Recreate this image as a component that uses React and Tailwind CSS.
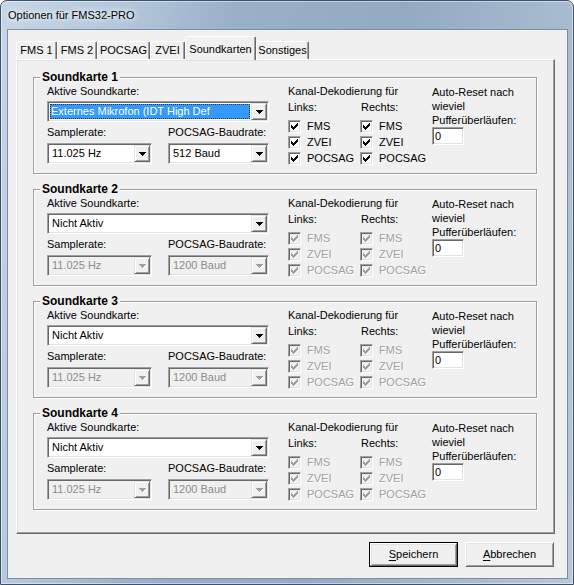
import React from "react";

// classic 3D edges
const SUNKEN =
  "border border-t-[#a0a0a0] border-l-[#a0a0a0] border-r-white border-b-white shadow-[inset_1px_1px_0_#696969,inset_-1px_-1px_0_#e3e3e3]";
const RAISED =
  "border border-t-[#e3e3e3] border-l-[#e3e3e3] border-r-[#696969] border-b-[#696969] shadow-[inset_1px_1px_0_#fff,inset_-1px_-1px_0_#a0a0a0]";
const BUTTON =
  "border border-t-white border-l-white border-r-[#696969] border-b-[#696969] shadow-[inset_1px_1px_0_#e3e3e3,inset_-1px_-1px_0_#a0a0a0]";
const GRAYTEXT = "text-[#a0a0a0] [text-shadow:1px_1px_0_#fff]";

const tabs = [
  { label: "FMS 1", w: "w-[41px]" },
  { label: "FMS 2", w: "w-[40px]" },
  { label: "POCSAG", w: "w-[53px]" },
  { label: "ZVEI", w: "w-[35px]" },
  { label: "Soundkarten", w: "w-[71px]", active: true },
  { label: "Sonstiges", w: "w-[53px]" },
];

const cards = [
  { n: 1, device: "Externes Mikrofon (IDT High Def", rate: "11.025 Hz", baud: "512 Baud", on: true },
  { n: 2, device: "Nicht Aktiv", rate: "11.025 Hz", baud: "1200 Baud", on: false },
  { n: 3, device: "Nicht Aktiv", rate: "11.025 Hz", baud: "1200 Baud", on: false },
  { n: 4, device: "Nicht Aktiv", rate: "11.025 Hz", baud: "1200 Baud", on: false },
];

const channels = ["FMS", "ZVEI", "POCSAG"];

const Arrow = ({ disabled }) => (
  <svg width="7" height="4" viewBox="0 0 7 4" className={disabled ? "[filter:drop-shadow(1px_1px_0_#fff)]" : ""}>
    <path d="M0 0h7v1h-1v1h-1v1h-1v1h-1v-1h-1v-1h-1v-1h-1z" fill={disabled ? "#a0a0a0" : "#000"} />
  </svg>
);

const ComboBox = ({ value, width, disabled, focused, className = "" }) => (
  <div className={`flex h-[21px] p-px ${SUNKEN} ${disabled ? "bg-[#f0f0f0]" : "bg-white"} ${width} ${className}`}>
    <div className="flex min-w-0 flex-1 p-px">
      <div
        className={`flex min-w-0 flex-1 items-center overflow-hidden whitespace-nowrap leading-[13px] ${
          focused
            ? "bg-[#3399ff] pl-[1px] text-white outline-1 outline-dotted outline-[#333] outline-offset-[-1px]"
            : disabled
            ? "pl-[2px] text-[#8c8c8c]"
            : "pl-[2px]"
        }`}
      >
        {value}
      </div>
    </div>
    <div className={`flex w-[16px] shrink-0 items-center justify-center bg-[#f0f0f0] ${RAISED}`}>
      <Arrow disabled={disabled} />
    </div>
  </div>
);

const CheckBox = ({ disabled }) => (
  <span className={`flex h-[13px] w-[13px] shrink-0 items-center justify-center ${SUNKEN} ${disabled ? "bg-[#f0f0f0]" : "bg-white"}`}>
    <svg width="7" height="7" viewBox="0 0 7 7">
      <path
        d="M0 2h1v3H0z M1 3h1v3H1z M2 4h1v3H2z M3 3h1v3H3z M4 2h1v3H4z M5 1h1v3H5z M6 0h1v3H6z"
        fill={disabled ? "#a0a0a0" : "#000"}
      />
    </svg>
  </span>
);

const PushButton = ({ hot, rest, isDefault }) => {
  const text = (
    <span>
      <span className="underline underline-offset-[2px]">{hot}</span>
      {rest}
    </span>
  );
  return isDefault ? (
    <div className="h-[25px] w-[89px] shrink-0 border border-black">
      <div className={`flex h-full w-full items-center justify-center bg-[#f0f0f0] ${BUTTON}`}>{text}</div>
    </div>
  ) : (
    <div className={`flex h-[25px] w-[89px] shrink-0 items-center justify-center bg-[#f0f0f0] ${BUTTON}`}>{text}</div>
  );
};

const SoundCard = ({ card }) => {
  const off = !card.on;
  return (
    <div className="h-[97px] border border-[#a0a0a0] shadow-[1px_1px_0_#fff,inset_1px_1px_0_#fff]">
      <div className="-mt-[8px] ml-[6px] w-fit bg-[#f0f0f0] px-[2px] text-[12px] font-bold leading-[14px]">
        Soundkarte {card.n}
      </div>
      <div className="flex pl-[13px] pt-[1px]">
        {/* device, samplerate, baudrate */}
        <div className="w-[222px]">
          <div className="leading-[13px]">Aktive Soundkarte:</div>
          <ComboBox className="mt-[3px]" width="w-full" value={card.device} focused={card.on} />
          <div className="mt-[4px] flex leading-[13px]">
            <span className="w-[121px]">Samplerate:</span>
            <span>POCSAG-Baudrate:</span>
          </div>
          <div className="mt-[4px] flex gap-[16px]">
            <ComboBox width="w-[105px]" value={card.rate} disabled={off} />
            <ComboBox width="w-[101px]" value={card.baud} disabled={off} />
          </div>
        </div>

        {/* channel decoding */}
        <div className="ml-[19px] w-[144px]">
          <div className="leading-[13px]">Kanal-Dekodierung für</div>
          <div className="mt-[3px] flex leading-[13px]">
            <span className="w-[73px]">Links:</span>
            <span>Rechts:</span>
          </div>
          <div className="mt-[4px] flex">
            {["l", "r"].map((side) => (
              <div key={side} className="w-[73px]">
                {channels.map((ch) => (
                  <div key={ch} className="flex h-[16px] items-center gap-[6px]">
                    <CheckBox disabled={off} />
                    <span className={`leading-[13px] ${off ? GRAYTEXT : ""}`}>{ch}</span>
                  </div>
                ))}
              </div>
            ))}
          </div>
        </div>

        {/* auto reset */}
        <div className="leading-[14px]">
          <div>
            Auto-Reset nach
            <br />
            wieviel
            <br />
            Pufferüberläufen:
          </div>
          <div className={`flex h-[18px] w-[32px] items-center bg-white pl-[2px] leading-[13px] ${SUNKEN}`}>0</div>
        </div>
      </div>
    </div>
  );
};

export default function App() {
  return (
    <div className="h-[585px] w-[574px] overflow-hidden bg-white font-['Liberation_Sans',Arial,sans-serif] text-[11px] text-black">
      <div className="flex h-full flex-col rounded-t-[7px] border border-[#3e526a] bg-[linear-gradient(100deg,#c6d6e6_0%,#b4c7dc_18%,#9ab0c8_35%,#93aac3_60%,#a9bccf_85%,#b8c8d9_100%)] shadow-[inset_0_0_0_1px_rgba(255,255,255,0.45)]">
        {/* title bar */}
        <div className="flex h-[28px] shrink-0 items-center pl-[7px]">
          <span className="[text-shadow:0_0_8px_#fff,0_0_4px_#fff]">Optionen für FMS32-PRO</span>
        </div>

        {/* client area */}
        <div className="ml-[6px] mr-[5px] h-[550px] border border-[#7b8ea3] bg-[#f0f0f0] pt-[6px]">
          <div className="ml-[8px] w-[539px]">
            <div className="flex h-[23px] items-end">
              {tabs.map((t) =>
                t.active ? (
                  <div
                    key={t.label}
                    className={`relative z-10 -mb-px h-[24px] ${t.w} rounded-t-[2px] border-l border-t border-r border-l-white border-t-white border-r-[#696969] bg-[#f0f0f0] pt-[6px] text-center leading-[13px] shadow-[inset_-1px_0_0_#a0a0a0]`}
                  >
                    {t.label}
                  </div>
                ) : (
                  <div
                    key={t.label}
                    className={`h-[18px] ${t.w} rounded-t-[2px] border-l border-t border-r border-l-white border-t-white border-r-[#696969] pt-[2px] text-center leading-[13px] shadow-[inset_-1px_0_0_#a0a0a0]`}
                  >
                    {t.label}
                  </div>
                )
              )}
            </div>

            <div className="flex h-[475px] flex-col gap-[15px] border border-l-white border-t-white border-r-[#696969] border-b-[#696969] pl-[16px] pr-[17px] pt-[17px] shadow-[inset_-1px_-1px_0_#a0a0a0,inset_1px_1px_0_#e3e3e3]">
              {cards.map((c) => (
                <SoundCard key={c.n} card={c} />
              ))}
            </div>
          </div>

          <div className="mt-[8px] flex justify-end gap-[7px] pr-[13px]">
            <PushButton hot="S" rest="peichern" isDefault />
            <PushButton hot="A" rest="bbrechen" />
          </div>
        </div>
      </div>
    </div>
  );
}
